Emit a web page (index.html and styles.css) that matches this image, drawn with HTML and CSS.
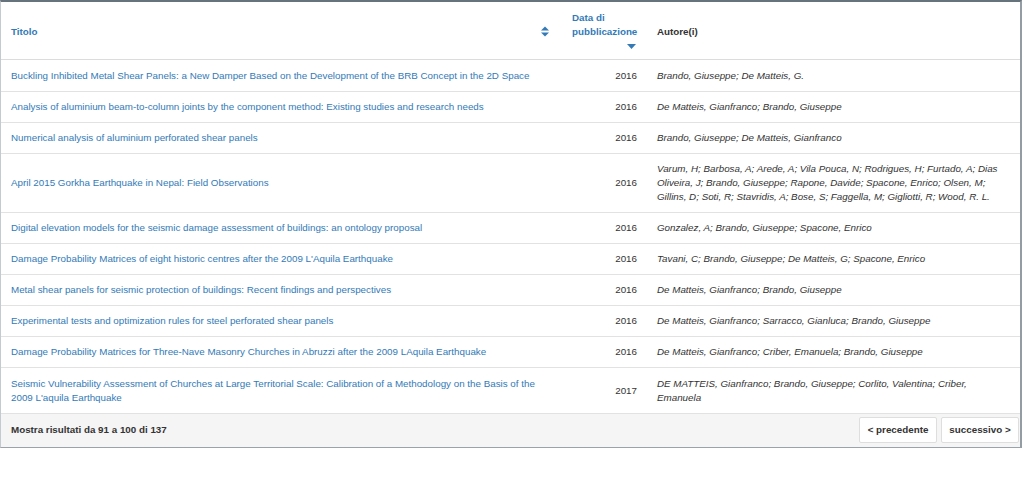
FILE: index.html
```html
<!DOCTYPE html>
<html lang="it">
<head>
<meta charset="utf-8">
<title>Risultati</title>
<link rel="stylesheet" href="styles.css">
</head>
<body>
<div class="panel">
  <table class="results">
    <colgroup>
      <col class="c-title">
      <col class="c-date">
      <col class="c-auth">
    </colgroup>
    <thead>
      <tr>
        <th class="th-title">
          <div class="th-flex">
            <a href="#" class="sortlink">Titolo</a>
            <svg class="sort-icon" width="8" height="11" viewBox="0 0 8 11"><path d="M0 4.5 L4 0.5 L8 4.5 Z M0 6.5 L4 10.5 L8 6.5 Z" fill="#337ab7"/></svg>
          </div>
        </th>
        <th class="th-date">
          <a href="#" class="sortlink">Data di<br>pubblicazione</a>
          <div class="caret-row"><svg width="9" height="5" viewBox="0 0 9 5"><path d="M0 0 L9 0 L4.5 5 Z" fill="#337ab7"/></svg></div>
        </th>
        <th class="th-auth">Autore(i)</th>
      </tr>
    </thead>
    <tbody>
      <tr class="first"><td><a href="#">Buckling Inhibited Metal Shear Panels: a New Damper Based on the Development of the BRB Concept in the 2D Space</a></td><td class="date">2016</td><td class="auth">Brando, Giuseppe; De Matteis, G.</td></tr>
      <tr><td><a href="#">Analysis of aluminium beam-to-column joints by the component method: Existing studies and research needs</a></td><td class="date">2016</td><td class="auth">De Matteis, Gianfranco; Brando, Giuseppe</td></tr>
      <tr><td><a href="#">Numerical analysis of aluminium perforated shear panels</a></td><td class="date">2016</td><td class="auth">Brando, Giuseppe; De Matteis, Gianfranco</td></tr>
      <tr><td><a href="#">April 2015 Gorkha Earthquake in Nepal: Field Observations</a></td><td class="date">2016</td><td class="auth">Varum, H; Barbosa, A; Arede, A; Vila Pouca, N; Rodrigues, H; Furtado, A; Dias Oliveira, J; Brando, Giuseppe; Rapone, Davide; Spacone, Enrico; Olsen, M; Gillins, D; Soti, R; Stavridis, A; Bose, S; Faggella, M; Gigliotti, R; Wood, R. L.</td></tr>
      <tr><td><a href="#">Digital elevation models for the seismic damage assessment of buildings: an ontology proposal</a></td><td class="date">2016</td><td class="auth">Gonzalez, A; Brando, Giuseppe; Spacone, Enrico</td></tr>
      <tr><td><a href="#">Damage Probability Matrices of eight historic centres after the 2009 L'Aquila Earthquake</a></td><td class="date">2016</td><td class="auth">Tavani, C; Brando, Giuseppe; De Matteis, G; Spacone, Enrico</td></tr>
      <tr><td><a href="#">Metal shear panels for seismic protection of buildings: Recent findings and perspectives</a></td><td class="date">2016</td><td class="auth">De Matteis, Gianfranco; Brando, Giuseppe</td></tr>
      <tr><td><a href="#">Experimental tests and optimization rules for steel perforated shear panels</a></td><td class="date">2016</td><td class="auth">De Matteis, Gianfranco; Sarracco, Gianluca; Brando, Giuseppe</td></tr>
      <tr><td><a href="#">Damage Probability Matrices for Three-Nave Masonry Churches in Abruzzi after the 2009 LAquila Earthquake</a></td><td class="date">2016</td><td class="auth">De Matteis, Gianfranco; Criber, Emanuela; Brando, Giuseppe</td></tr>
      <tr class="last"><td><a href="#">Seismic Vulnerability Assessment of Churches at Large Territorial Scale: Calibration of a Methodology on the Basis of the 2009 L'aquila Earthquake</a></td><td class="date">2017</td><td class="auth">DE MATTEIS, Gianfranco; Brando, Giuseppe; Corlito, Valentina; Criber, Emanuela</td></tr>
    </tbody>
  </table>
  <div class="panel-footer">
    <span class="count">Mostra risultati da 91 a 100 di 137</span>
    <div class="pager">
      <a href="#" class="pbtn">&lt; precedente</a>
      <a href="#" class="pbtn">successivo &gt;</a>
    </div>
  </div>
</div>
</body>
</html>
```

FILE: styles.css
```css
html, body {
  margin: 0;
  padding: 0;
  background: #fff;
}
body {
  font-family: "Liberation Sans", Arial, Helvetica, sans-serif;
  font-size: 9.8px;
  line-height: 14px;
  color: #333;
}
a {
  color: #337ab7;
  text-decoration: none;
}
.panel {
  width: 1019px;
  border-left: 1px solid #c4cacf;
  border-top: 2px solid #66727c;
  border-right: 2px solid #949da4;
  border-bottom: 1px solid #9aa3aa;
}
.results {
  width: 100%;
  border-collapse: collapse;
  table-layout: fixed;
}
.c-title { width: 561px; }
.c-date { width: 85px; }
.results th,
.results td {
  padding: 8px 10px 8px 10px;
  vertical-align: middle;
  text-align: left;
}
.results td {
  border-top: 1px solid #e2e2e2;
}
.results th {
  font-weight: bold;
  border-bottom: 1px solid #dcdcdc;
  padding-top: 9px;
  padding-bottom: 7px;
}
.results tr.first td,
.results tr.last td {
  padding-top: 9px;
}
.th-flex {
  display: flex;
  justify-content: space-between;
  align-items: center;
}
.sort-icon {
  display: block;
  margin-right: 3px;
}
.caret-row {
  display: flex;
  justify-content: flex-end;
  padding-top: 5px;
  padding-right: 1px;
  height: 8px;
}
.caret-row svg { display: block; }
.th-auth {
  color: #333;
}
.results td.date {
  text-align: right;
  color: #333;
}
.results td.auth {
  font-style: italic;
  padding-right: 12px;
}
.panel-footer {
  background: #f5f5f5;
  border-top: 1px solid #e2e2e2;
  display: flex;
  justify-content: space-between;
  align-items: center;
  padding: 3px 1px 4px 10px;
}
.count {
  font-weight: bold;
}
.pager {
  display: flex;
  gap: 4px;
}
.pbtn {
  display: block;
  background: #fff;
  border: 1px solid #dedede;
  border-radius: 2px;
  color: #333;
  font-weight: bold;
  width: 76px;
  height: 24px;
  line-height: 23px;
  text-align: center;
}
```
